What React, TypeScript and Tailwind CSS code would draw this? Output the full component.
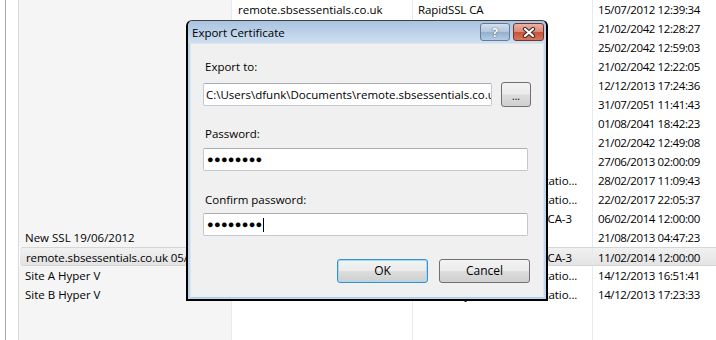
import React from 'react';

const rows = [
  { a: '', b: 'remote.sbsessentials.co.uk', c: 'RapidSSL CA', d: '15/07/2012 12:39:34' },
  { a: '', b: 'WMSvc-SBS2011', c: 'WMSvc-SBS2011', d: '21/02/2042 12:28:27' },
  { a: '', b: 'sbs2011.local', c: 'sbs2011-CA', d: '25/02/2042 12:59:03' },
  { a: '', b: 'sbs2011-CA', c: 'sbs2011-CA', d: '21/02/2042 12:22:05' },
  { a: '', b: 'localhost', c: 'localhost', d: '12/12/2013 17:24:36' },
  { a: '', b: 'Root Agency', c: 'Root Agency', d: '31/07/2051 11:41:43' },
  { a: '', b: 'sbs2011', c: 'sbs2011', d: '01/08/2041 18:42:23' },
  { a: '', b: 'SBS2011.local', c: 'sbs2011-CA', d: '21/02/2042 12:49:08' },
  { a: '', b: 'remote.sbsessentials.co.uk', c: 'RapidSSL CA', d: '27/06/2013 02:00:09' },
  { a: '', b: 'hyperv-a.sbs2011.local', c: 'Go Daddy Secure Certificatio...', d: '28/02/2017 11:09:43' },
  { a: '', b: 'hyperv-b.sbs2011.local', c: 'Go Daddy Secure Certificatio...', d: '22/02/2017 22:05:37' },
  { a: '', b: 'mail.sbsessentials.co.uk', c: 'DigiCert High Assurance CA-3', d: '06/02/2014 12:00:00' },
  { a: 'New SSL 19/06/2012', b: 'remote.sbsessentials.co.uk', c: 'RapidSSL CA', d: '21/08/2013 04:47:23' },
  { a: 'remote.sbsessentials.co.uk 05/06/2012', b: 'remote.sbsessentials.co.uk', c: 'DigiCert High Assurance CA-3', d: '11/02/2014 12:00:00' },
  { a: 'Site A Hyper V', b: 'sitea.sbsessentials.co.uk', c: 'Go Daddy Secure Certificatio...', d: '14/12/2013 16:51:41' },
  { a: 'Site B Hyper V', b: 'siteb.sbsessentials.co.uk', c: 'Go Daddy Secure Certificatio...', d: '14/12/2013 17:23:33' },
];

const SELECTED = 13;

const winBtn =
  'bg-[linear-gradient(#f3f3f3_0%,#ebebeb_48%,#dddddd_52%,#cfcfcf_100%)] rounded-[3px] flex items-center justify-center text-black';

const field =
  'h-[23px] bg-white border border-[#c4c8cf] border-t-[#abadb3] rounded-[2px] pl-[2px] flex items-center overflow-hidden whitespace-nowrap';

const Dots = () => (
  <span className="font-['Liberation_Sans',sans-serif] text-[11px] tracking-[0.3px] leading-none">●●●●●●●●</span>
);

const ExportDialog = () => (
  <div className="absolute left-[186px] top-[20px] w-[362px] h-[281px] rounded-t-[6px] border-2 border-t border-black border-t-[#404040] bg-[#c3d7ec] flex flex-col">
    {/* title bar */}
    <div className="h-[22px] shrink-0 flex items-start rounded-t-[5px] bg-linear-to-b from-[#a9c3e1] to-[#cfdff0] pl-[4px] pr-[2px]">
      <span className="leading-[24px] text-[11.5px] text-black">Export Certificate</span>
      <div className="ml-auto mt-[2px] flex gap-[3px]">
        <div className="w-[30px] h-[18px] rounded-[3px] border border-[#647c98] bg-[linear-gradient(#d2dfed_0%,#b2c7df_48%,#95afcd_52%,#b3cbe5_100%)] flex items-center justify-center">
          <span className="text-white font-bold text-[13px] leading-none [text-shadow:0_0_1px_#3c4a5a,0_0_1px_#3c4a5a]">?</span>
        </div>
        <div className="w-[31px] h-[18px] rounded-[3px] border border-[#6e3a30] bg-[linear-gradient(#eeb0a2_0%,#dc8a76_48%,#c8533c_52%,#d7765c_100%)] flex items-center justify-center">
          <svg width="14" height="11" viewBox="0 0 14 11">
            <path d="M3 2 L11 9 M11 2 L3 9" stroke="#3a2a28" strokeWidth="4.2" strokeLinecap="round" />
            <path d="M3 2 L11 9 M11 2 L3 9" stroke="#fff" strokeWidth="2.2" strokeLinecap="round" />
          </svg>
        </div>
      </div>
    </div>

    {/* client area */}
    <div className="flex-1 mx-[2px] mb-px bg-[#f0f0f0] border border-[#dbe6f2] border-b-[#9fd3ec] pl-[12px] pt-[15px] flex flex-col text-[11.5px]">
      <div className="pl-[2px] leading-[15px]">Export to:</div>
      <div className="mt-[8px] flex items-center">
        <div className={`${field} w-[289px]`}>
          {'C:\\Users\\dfunk\\Documents\\remote.sbsessentials.co.uk'}
        </div>
        <div className={`${winBtn} ml-[9px] w-[30px] h-[25px] border border-[#707070] text-[10px] pt-[4px]`}>...</div>
      </div>

      <div className="mt-[19px] pl-[2px] leading-[15px]">Password:</div>
      <div className={`${field} mt-[7px] w-[325px] pl-[3px]`}>
        <Dots />
      </div>

      <div className="mt-[21px] pl-[2px] leading-[15px]">Confirm password:</div>
      <div className={`${field} mt-[6px] w-[325px] pl-[3px] border-[#a9c9ea] border-t-[#7eaee0]`}>
        <Dots />
        <span className="inline-block w-px h-[14px] bg-black" />
      </div>

      <div className="mt-[23px] pr-[13px] flex justify-end gap-[11px]">
        <div className={`${winBtn} w-[91px] h-[24px] border border-[#3c8fcf] shadow-[inset_0_0_0_1px_#9fdcf8] text-[12px]`}>OK</div>
        <div className={`${winBtn} w-[91px] h-[24px] border border-[#707070] text-[12px]`}>Cancel</div>
      </div>
    </div>
  </div>
);

const App = () => {
  return (
    <div className="relative w-[716px] h-[340px] overflow-hidden bg-white text-black text-[11.5px] font-['Open_Sans','Noto_Sans',sans-serif] flex">
      {/* left strip */}
      <div className="w-[19px] shrink-0 flex">
        <div className="ml-[5px] flex-1 border-l border-r border-l-[#a7a7a7] border-r-[#dadada] bg-white" />
      </div>

      {/* certificate list */}
      <div className="flex-1 flex flex-col">
        {rows.map((r, i) => {
          const sel = i === SELECTED;
          return (
            <div
              key={i}
              className={`h-[19px] shrink-0 flex leading-[19px] ${sel ? 'bg-[linear-gradient(#f1f1f1,#e3e3e3)] border-y border-[#d6d6d6] rounded-l-[3px] ml-[1px] leading-[17px]' : ''}`}
            >
              <div className={`${sel ? 'w-[212px] tracking-[-0.1px]' : 'w-[213px] bg-[#f5f5f5]'} shrink-0 border-r border-[#e6eaef] pl-[6px] truncate`}>{r.a}</div>
              <div className="w-[181px] shrink-0 border-r border-[#e6eaef] pl-[6px] truncate">{r.b}</div>
              <div className="w-[180px] shrink-0 border-r border-[#e6eaef] pl-[5px] truncate tracking-[-0.1px]">{r.c}</div>
              <div className="flex-1 pl-[5px] whitespace-nowrap tracking-[-0.4px]">{r.d}</div>
            </div>
          );
        })}
        <div className="flex-1 flex">
          <div className="w-[213px] shrink-0 bg-[#f5f5f5] border-r border-[#e6eaef]" />
          <div className="w-[181px] shrink-0 border-r border-[#e6eaef]" />
          <div className="w-[180px] shrink-0 border-r border-[#e6eaef]" />
          <div className="flex-1" />
        </div>
      </div>

      <ExportDialog />
    </div>
  );
};

export default App;
